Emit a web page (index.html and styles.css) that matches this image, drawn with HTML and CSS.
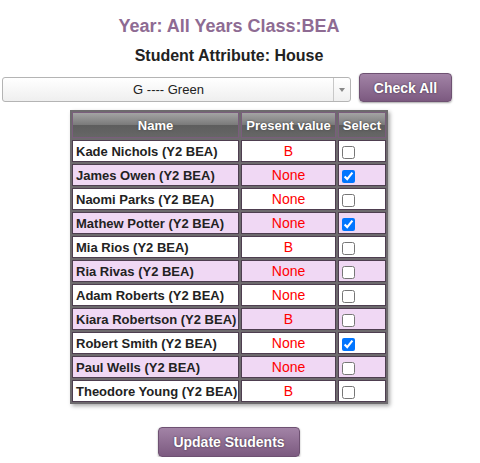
FILE: index.html
```html
<!DOCTYPE html>
<html>
	<head>
		<link rel="stylesheet" href="styles.css">
	</head>
	<body>
		<div class="page">
			<h1 class="title">Year: All Years Class:BEA</h1>
			<h2 class="subtitle">Student Attribute: House</h2>

			<div class="controls">
				<div class="select-box">
					<span class="select-text">G ---- Green</span>
					<span class="select-arrow"></span>
				</div>
				<button class="btn btn-check">Check All</button>
			</div>

			<table class="students">
				<tr>
					<th class="col-name">Name</th>
					<th class="col-value">Present value</th>
					<th class="col-select">Select</th>
				</tr>
				<tr>
					<td>Kade Nichols (Y2 BEA)</td>
					<td class="value">B</td>
					<td><input type="checkbox"></td>
				</tr>
				<tr class="alt">
					<td>James Owen (Y2 BEA)</td>
					<td class="value">None</td>
					<td><input type="checkbox" checked></td>
				</tr>
				<tr>
					<td>Naomi Parks (Y2 BEA)</td>
					<td class="value">None</td>
					<td><input type="checkbox"></td>
				</tr>
				<tr class="alt">
					<td>Mathew Potter (Y2 BEA)</td>
					<td class="value">None</td>
					<td><input type="checkbox" checked></td>
				</tr>
				<tr>
					<td>Mia Rios (Y2 BEA)</td>
					<td class="value">B</td>
					<td><input type="checkbox"></td>
				</tr>
				<tr class="alt">
					<td>Ria Rivas (Y2 BEA)</td>
					<td class="value">None</td>
					<td><input type="checkbox"></td>
				</tr>
				<tr>
					<td>Adam Roberts (Y2 BEA)</td>
					<td class="value">None</td>
					<td><input type="checkbox"></td>
				</tr>
				<tr class="alt">
					<td>Kiara Robertson (Y2 BEA)</td>
					<td class="value">B</td>
					<td><input type="checkbox"></td>
				</tr>
				<tr>
					<td>Robert Smith (Y2 BEA)</td>
					<td class="value">None</td>
					<td><input type="checkbox" checked></td>
				</tr>
				<tr class="alt">
					<td>Paul Wells (Y2 BEA)</td>
					<td class="value">None</td>
					<td><input type="checkbox"></td>
				</tr>
				<tr>
					<td>Theodore Young (Y2 BEA)</td>
					<td class="value">B</td>
					<td><input type="checkbox"></td>
				</tr>
			</table>

			<div class="footer">
				<button class="btn btn-update">Update Students</button>
			</div>
		</div>
	</body>
</html>
```

FILE: styles.css
```css
body {
	margin: 0;
	font-family: "Liberation Sans", Arial, sans-serif;
	color: #222;
}

.page {
	width: 458px;
	padding-top: 16px;
}

.title {
	margin: 0;
	text-align: center;
	font-size: 18px;
	font-weight: bold;
	color: #8e6b93;
	line-height: 20px;
}

.subtitle {
	margin: 10px 0 0 0;
	text-align: center;
	font-size: 16px;
	font-weight: bold;
	color: #222;
	line-height: 20px;
}

.controls {
	display: flex;
	align-items: flex-end;
	margin-top: 7px;
	padding-left: 2px;
}

.select-box {
	position: relative;
	width: 347px;
	height: 23px;
	border: 1px solid #b4b4b4;
	border-radius: 3px;
	background: linear-gradient(#ffffff, #efefef);
	display: flex;
	align-items: center;
	justify-content: center;
}

.select-text {
	font-size: 13px;
	color: #222;
	padding-right: 16px;
}

.select-arrow {
	position: absolute;
	right: 0;
	top: 0;
	width: 16px;
	height: 23px;
	border-left: 1px solid #c8c8c8;
}

.select-arrow:after {
	content: "";
	position: absolute;
	left: 5px;
	top: 10px;
	border-left: 3px solid transparent;
	border-right: 3px solid transparent;
	border-top: 4px solid #888;
}

.btn {
	font-family: "Liberation Sans", Arial, sans-serif;
	font-size: 14px;
	font-weight: bold;
	color: #fff;
	text-shadow: 0 0 2px #3a2a3c;
	background: linear-gradient(#a283a6, #7c5a80);
	border: 1px solid #6e5172;
	border-radius: 4px;
	box-shadow: 0 1px 2px rgba(0, 0, 0, 0.35);
	cursor: pointer;
}

.btn-check {
	margin-left: 8px;
	width: 93px;
	height: 29px;
}

.students {
	margin: 8px auto 0 auto;
	border-collapse: separate;
	border-spacing: 2px;
	background: #6d6a6d;
	box-shadow: 2px 2px 4px rgba(0, 0, 0, 0.35);
	font-size: 13px;
	table-layout: fixed;
	width: 318px;
}

.students th {
	height: 24px;
	padding: 0;
	border: 1px solid #7a5d7c;
	background: linear-gradient(#a4a4a4, #7a7a7a 50%, #5e5e5e 52%, #666 100%);
	color: #fff;
	font-size: 13px;
	font-weight: bold;
	text-shadow: 0 0 2px #444;
	white-space: nowrap;
	overflow: hidden;
}

.students .col-name {
	width: 165px;
}

.students .col-value {
	width: 93px;
}

.students .col-select {
	width: 46px;
}

.students td {
	height: 20px;
	padding: 0 0 0 3px;
	border: 1px solid #4e3e50;
	background: #fff;
	font-weight: bold;
	color: #222;
	white-space: nowrap;
	overflow: hidden;
}

.students tr.alt td {
	background: #f0d8f4;
}

.students td.value {
	padding: 0;
	text-align: center;
	font-weight: normal;
	font-size: 14px;
	color: #ff0000;
}

.students input {
	margin: 0;
	width: 13px;
	height: 13px;
	vertical-align: middle;
}

.footer {
	display: flex;
	justify-content: center;
	margin-top: 23px;
}

.btn-update {
	width: 142px;
	height: 30px;
}
```
